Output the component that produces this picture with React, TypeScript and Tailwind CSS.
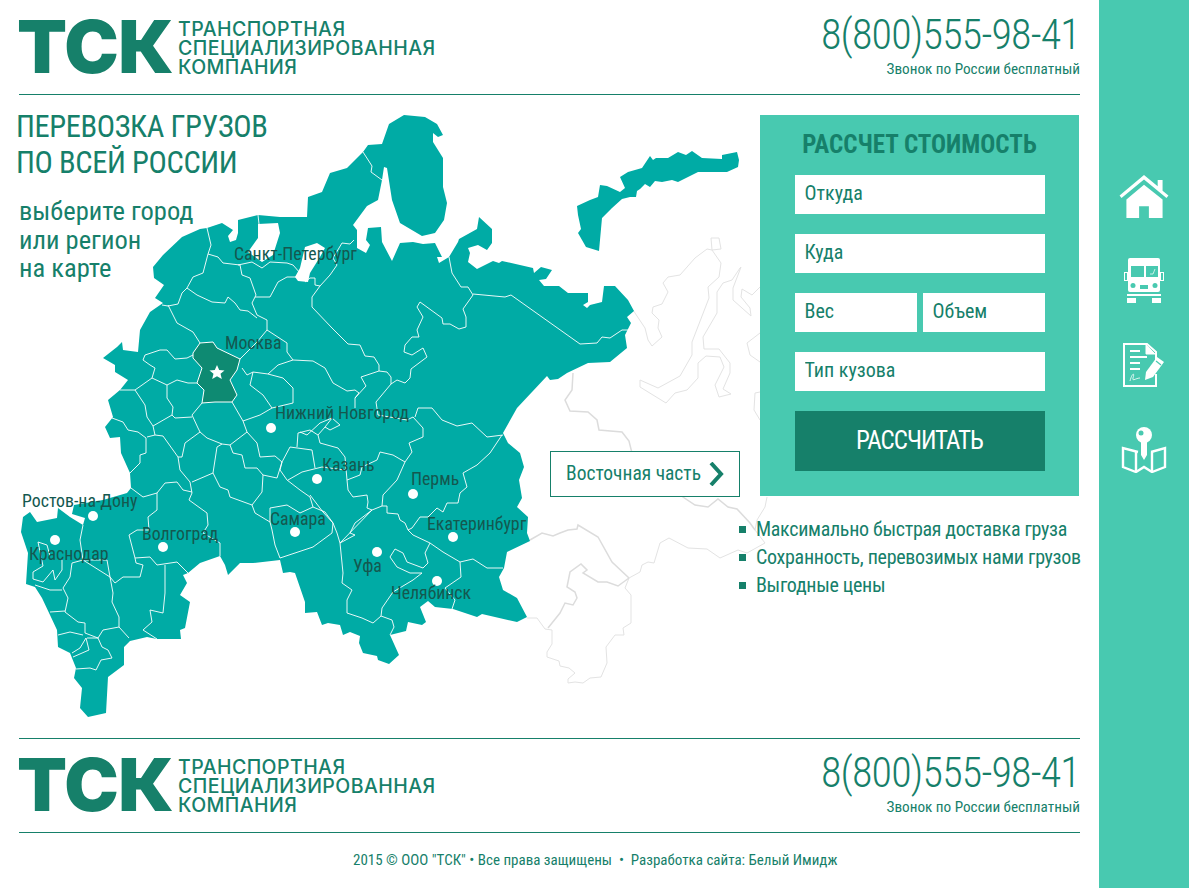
const OUTLINE = "153,267 163,255 182,237 200,229 207,228 222,223 233,230 228,236 230,242 236,240 238,233 238,220 258,215 280,217 307,217 308,197 322,192 330,173 347,168 363,152 368,145 382,144 389,124 404,115 425,117 437,124 443,135 438,137 433,133 433,142 443,158 443,187 447,203 444,220 435,233 422,236 400,223 392,200 387,168 384,167 382,180 378,200 367,206 353,225 357,230 357,248 366,253 370,245 366,240 368,228 381,227 382,242 392,261 400,243 413,242 423,244 435,243 442,257 437,257 439,263 449,257 458,242 459,239 477,229 479,217 492,229 492,243 487,250 478,245 468,248 470,253 468,262 477,269 493,261 499,263 502,261 533,268 534,273 541,267 552,270 546,279 539,280 544,286 559,286 568,293 588,293 588,302 583,305 587,308 590,305 602,302 604,286 615,286 628,300 634,311 627,317 631,323 625,335 627,348 610,362 588,363 567,373 558,379 550,380 547,376 532,392 517,408 503,433 508,443 520,453 524,467 519,480 522,498 517,507 528,517 527,533 530,541 507,552 504,568 499,577 503,590 517,598 527,617 517,622 482,614 477,617 453,609 435,607 428,601 420,607 426,622 422,625 408,622 406,631 390,635 399,655 389,664 378,660 377,656 363,653 359,643 360,636 350,632 343,635 340,625 328,623 322,625 317,612 305,613 305,602 295,573 290,572 283,573 280,560 253,563 240,563 228,575 225,565 220,556 200,563 188,573 183,575 187,583 180,595 190,602 185,628 180,630 181,639 157,639 147,637 130,641 124,647 124,665 108,677 106,713 88,717 80,708 82,688 74,678 76,668 70,653 58,647 57,630 50,615 42,598 35,587 26,584 28,553 21,532 23,517 30,512 37,522 57,518 58,508 70,517 83,525 85,518 72,514 74,505 103,500 127,493 131,488 130,473 121,453 120,437 110,438 105,427 113,417 108,400 120,390 128,380 115,372 115,365 103,358 117,347 122,342 123,350 138,352 140,330 150,312 163,303 155,298 164,285 154,278";

const LAKES = ["258,224 278,223 280,233 273,255 262,262 248,252 258,238", "305,247 317,243 325,248 320,257 310,273 308,282 298,281 295,277 300,268"];

const NZ = "577,206 590,200 598,197 600,185 607,186 620,192 625,188 620,177 628,172 642,168 650,156 653,160 656,158 668,158 678,152 686,155 692,151 702,158 722,159 722,155 737,152 739,160 738,167 727,172 698,172 678,182 672,180 662,182 655,181 650,187 645,184 640,189 637,191 636,197 630,197 622,199 612,208 602,218 599,251 586,247 582,240 578,233 581,229 578,215";

const BORDERS = [
  "207,228 211,245 208,254 203,273 193,277 187,288 182,293 178,304 168,306 162,305",
  "208,254 218,257 223,263 240,265 242,275 250,278 256,295 252,303 257,315 267,320 267,330",
  "187,288 197,295 212,302 225,303 228,297 235,303 240,310 248,311 257,318",
  "168,305 177,323 193,332 200,343",
  "267,330 287,343 287,352 293,360 313,361 325,368 333,383 347,391 355,390 359,393 355,398 355,408",
  "267,330 257,342 240,359",
  "293,360 278,365 268,374 253,372 247,375 242,368",
  "253,372 250,385 263,395 272,408 260,415 243,421 232,402",
  "243,421 247,432 257,443 260,457 275,456 282,462 277,478 263,475 257,468 245,468 242,455 233,453 230,445 247,432",
  "272,408 293,403 293,388 283,378 268,374",
  "202,403 192,415 198,428 200,432 207,438 222,444 230,445",
  "200,432 185,443 182,457 178,457 168,443 163,436 155,435 153,426 172,415 175,418 192,417",
  "167,385 167,398 173,407 172,415",
  "135,390 152,378 167,385 177,380 188,383 197,383",
  "152,378 155,368 150,365 143,360 145,355 160,350 167,350 175,359 187,358 193,355",
  "120,390 135,390 145,405 147,417 153,426",
  "112,418 123,422 128,430 138,432 146,438 146,453 140,455 140,463 130,473",
  "147,437 155,435",
  "178,457 180,470 190,482 192,493 189,500 207,513 208,525 203,533 220,543 220,556",
  "192,482 213,473 217,447 222,444",
  "213,473 220,487 228,490 230,497 252,505 262,492 263,475",
  "252,505 255,513 270,522 270,508 287,505 300,513 313,507 325,512 333,523 332,533 313,547 280,558 275,545 272,530 270,522",
  "313,507 310,497 300,490 287,480 280,470 282,462",
  "288,480 302,472 322,467 345,470",
  "282,462 290,447 312,450 315,468",
  "297,447 298,433 310,430 318,435 325,427 332,418 320,423 307,435 300,432",
  "325,427 330,430 340,425 332,418",
  "318,435 320,443 338,448 345,457 347,480 348,490 353,497 367,495 368,502 367,508 372,510 382,506",
  "347,480 360,475 362,467 377,460 380,452 393,455 405,462",
  "131,488 143,497 157,493 165,483 177,482 183,490 192,492",
  "157,493 157,510 148,517 149,530 137,530 129,535 135,558 136,563 143,565 140,577 123,577 115,583 110,577 107,560 83,560",
  "135,558 150,557 157,565 177,562 188,573",
  "165,565 165,593 163,613 150,610 152,622 143,630 157,639",
  "83,525 80,540 83,560 110,577 113,593 112,602 119,617 119,627 103,630 98,638 87,638",
  "119,627 129,638",
  "83,560 72,563 70,577 63,588 68,598 65,612 78,622 85,623 85,633 98,638",
  "35,585 50,590 62,590",
  "50,612 65,611",
  "58,635 70,632 83,635",
  "72,653 80,648 86,638 89,650 73,657",
  "76,669 90,668 96,670 101,660 112,658 108,650 102,647 98,638",
  "33,572 33,579 43,582 53,570 55,580 62,570 62,560",
  "33,572 43,566 38,542 47,545 50,556",
  "255,297 270,297 278,282 287,277 297,277",
  "238,265 252,262 262,268 270,262 287,263 293,265 300,273",
  "305,282 310,278 315,278 315,285 320,286 330,275 337,265 333,258 342,243 350,244 354,240",
  "320,286 312,297 312,307 332,328 348,344 360,345 365,356 374,357 379,365 379,371 361,377 366,386 355,398",
  "379,371 387,372 391,377 391,384 376,402 378,415 407,420 413,417 423,428 423,437 409,443 412,452 405,462 397,480 383,495 382,506",
  "391,384 397,380 405,383 410,378 411,369 427,357 423,348 412,355 404,352 405,345 412,337 419,337 417,330 423,317 417,307 420,302 442,318 443,324 450,324 459,329 466,327 466,317 463,309 473,295 468,287 461,287 452,273 449,257",
  "473,294 505,297 511,295 580,344 597,343 602,337 610,338 622,330 628,330",
  "363,152 372,166 371,172 382,180",
  "415,417 418,408 432,408 442,420 457,426 472,423 487,437 503,435",
  "502,435 490,453 477,465 463,473 467,487 460,493 458,503 447,503 443,512 437,508 428,517 420,517 412,528 408,530",
  "382,506 387,506 387,513 398,514 400,520 405,523 408,530 413,535 430,543 443,552 460,562 473,559 487,568 503,568",
  "460,562 461,577 445,588 455,600 452,609",
  "430,543 425,553 428,563 423,568 407,562 403,553 395,549 390,557 397,567 410,573 422,573 413,580 393,592 382,608 381,616 392,620 394,627 390,635",
  "381,616 373,623 362,618 347,613 347,600 352,590 342,583 343,573 340,543 372,510",
  "340,543 337,533 333,523 323,512 310,495",
  "340,543 355,535 350,533 355,523 372,510",
  "258,215 259,224",
];

const GRAY_THIN = [
  "633,310 645,328 648,340 652,346 662,337 658,328 659,320 652,313 653,307 662,304 668,292 663,283 668,277 680,275 695,258 707,249 712,250 711,238 719,238 721,249 712,250 721,263 719,277 708,287 709,298 692,342 692,355 680,376 658,388 640,380 640,387 666,403 675,393 687,390 698,378 698,363 706,356 720,357 724,367 715,385 719,397 731,394 723,389 730,373 730,363 719,349 704,349 703,337 717,313 717,292 723,283 732,280 740,268 741,267 733,288 733,300 751,316 750,308 741,297 742,289 752,295 760,287",
  "760,333 747,343 750,355 760,362",
  "760,392 755,393 754,410 760,420",
  "767,497 765,507 757,520 755,530 765,543 747,553 738,550 720,558 707,549 688,548 669,538 660,543 654,563 648,562 642,565 640,572 629,578",
  "629,578 625,588 631,595 631,623 623,628 624,635 615,635 606,647 607,663 601,677 590,678 583,683 575,682 568,683 568,679 575,673 569,668 560,666 559,661 547,657 547,652 552,644 552,630 545,629 537,618 527,618",
];
const GRAY_THICK = [
  "573,373 572,390 565,400 570,411 588,412 597,420 599,430 622,432 629,441 632,453 633,468 650,468 672,482 680,487 683,497 695,505 708,507 718,499 728,507 737,509 750,523 755,530",
  "530,540 542,533 553,536 560,533 568,530 577,529 578,525 598,537 612,562 629,578",
  "548,628 560,613 565,603 573,605 577,598 575,592 567,587 570,572 581,564 587,570 583,573 598,582 607,582 618,586 629,578",
];

const PINS = [[271, 428], [317, 479], [413, 494], [453, 537], [295, 532], [377, 552], [437, 581], [163, 547], [93, 516], [55, 540]];

const LABELS: { text: string; x: number; y: number }[] = [
  { text: "Санкт-Петербург", x: 234, y: 254 },
  { text: "Москва", x: 225, y: 343 },
  { text: "Нижний Новгород", x: 275, y: 413 },
  { text: "Казань", x: 322, y: 465 },
  { text: "Пермь", x: 411, y: 479 },
  { text: "Екатеринбург", x: 427, y: 524 },
  { text: "Самара", x: 270, y: 519 },
  { text: "Уфа", x: 353, y: 566 },
  { text: "Челябинск", x: 391, y: 593 },
  { text: "Волгоград", x: 142, y: 534 },
  { text: "Ростов-на-Дону", x: 22, y: 501 },
  { text: "Краснодар", x: 29, y: 554 },
];

function RussiaMap() {
  return (
    <svg viewBox="0 95 1099 643" className="absolute left-0 top-0 h-[643px] w-[1099px]">
      {GRAY_THIN.map((p, i) => (
        <polyline key={i} points={p} fill="none" stroke="#e3e3e3" strokeWidth="1" />
      ))}
      {GRAY_THICK.map((p, i) => (
        <polyline key={i} points={p} fill="none" stroke="#dcdcdc" strokeWidth="1.5" />
      ))}
      <polygon points={OUTLINE} fill="#00aba5" />
      <polygon points={NZ} fill="#00aba5" />
      {LAKES.map((p, i) => (
        <polygon key={i} points={p} fill="#fff" />
      ))}
      {BORDERS.map((p, i) => (
        <polyline key={i} points={p} fill="none" stroke="#ffffff" strokeWidth="1" strokeOpacity="0.9" />
      ))}
      <polygon
        points="193,353 200,343 213,342 217,348 240,359 237,370 230,380 237,395 232,402 222,402 215,402 202,403 204,390 197,383 202,368 193,358"
        fill="#0e8a72"
        stroke="#ffffff"
        strokeWidth="1"
      />
      <polygon
        points="217,365 219.2,370 224.5,370.4 220.5,373.8 221.8,379 217,376.2 212.2,379 213.5,373.8 209.5,370.4 214.8,370"
        fill="#fff"
      />
      {PINS.map(([x, y], i) => (
        <circle key={i} cx={x} cy={y} r="5" fill="#fff" />
      ))}
    </svg>
  );
}

function Logo() {
  return (
    <div className="flex items-start">
      <span className="-ml-[2px] w-[161px] font-['Inter'] text-[73px] font-black leading-[52px] tracking-[-0.5px] text-[#16806a]">ТСК</span>
      <div className="-mt-[1px] font-['Inter'] text-[19.5px] font-medium leading-[19px] tracking-[0.45px] text-[#16806a]">
        <div>ТРАНСПОРТНАЯ</div>
        <div>СПЕЦИАЛИЗИРОВАННАЯ</div>
        <div>КОМПАНИЯ</div>
      </div>
    </div>
  );
}

function Phone() {
  return (
    <div className="text-right text-[#16806a]">
      <div className="text-[42px] font-light leading-[44px] tracking-[-0.8px]">8(800)555-98-41</div>
      <div className="mt-[3px] text-[15.2px] leading-[18px]">Звонок по России бесплатный</div>
    </div>
  );
}

function HouseIcon() {
  return (
    <svg width="50" height="43" viewBox="0 0 50 44" fill="#fff">
      <path d="M0 21 L25 0 L39 11.5 L39 5 L44 5 L44 16 L50 21 L48 23.5 L25 4.5 L2 23.5 Z" />
      <path d="M7 25 L25 10 L44 25 L44 44 L30 44 L30 32 L20 32 L20 44 L7 44 Z" />
    </svg>
  );
}

function TruckIcon() {
  return (
    <svg width="40" height="45" viewBox="0 0 40 45">
      <rect x="4" y="0" width="32" height="34" rx="2" fill="#fff" />
      <rect x="7" y="8" width="13" height="11" fill="#48c9b0" />
      <rect x="22" y="8" width="12" height="11" fill="#48c9b0" />
      <path d="M26 16 L29 16 L31 11" stroke="#fff" strokeWidth="0.7" fill="none" />
      <rect x="0.5" y="14.5" width="3" height="8" fill="none" stroke="#fff" strokeWidth="1" />
      <rect x="36.5" y="14.5" width="3" height="8" fill="none" stroke="#fff" strokeWidth="1" />
      <circle cx="9" cy="27.5" r="2.5" fill="#48c9b0" />
      <circle cx="31" cy="27.5" r="2.5" fill="#48c9b0" />
      <rect x="16" y="27" width="8" height="4" fill="#48c9b0" />
      <rect x="3" y="36" width="34" height="2" fill="#fff" />
      <rect x="3" y="40" width="9" height="5" fill="#fff" />
      <rect x="28" y="40" width="9" height="5" fill="#fff" />
    </svg>
  );
}

function DocIcon() {
  return (
    <svg width="42" height="44" viewBox="0 0 42 44" fill="none">
      <path d="M33 17 L33 9 L24 1 L1 1 L1 43 L33 43 L33 31" stroke="#fff" strokeWidth="2" />
      <path d="M23 2 L23 11 L32 11 Z" fill="#fff" stroke="#fff" strokeWidth="1" />
      <rect x="7" y="7" width="10" height="2" fill="#fff" />
      <rect x="7" y="13" width="17" height="2" fill="#fff" />
      <rect x="7" y="19" width="10" height="2" fill="#fff" />
      <rect x="7" y="25" width="10" height="2" fill="#fff" />
      <path d="M7 38 C9 30 12 29 10 35 C9 39 13 35 17 35" stroke="#fff" strokeWidth="0.8" />
      <path d="M22 37 L23 29 L34 14 L41 19 L30 34 Z" fill="#fff" />
      <path d="M33 18 L38 22" stroke="#48c9b0" strokeWidth="1.2" />
    </svg>
  );
}

function KeyMapIcon() {
  return (
    <svg width="46" height="46" viewBox="0 0 46 46">
      <circle cx="23" cy="8" r="8" fill="#fff" />
      <circle cx="20" cy="6" r="2.5" fill="#48c9b0" />
      <path d="M20 14 L26 14 L26 28 L23 33 L20 28 Z" fill="#fff" />
      <path d="M17 25 L2 21 L2 40 L15 45 L23 40 L31 45 L44 40 L44 21 L30 25" fill="none" stroke="#fff" strokeWidth="2.4" />
      <path d="M15 25 L15 45 M31 25 L31 45" stroke="#fff" strokeWidth="2.4" />
    </svg>
  );
}

function Field({ placeholder, className }: { placeholder: string; className: string }) {
  return (
    <input
      placeholder={placeholder}
      className={`h-[39px] bg-white px-[10px] pb-[3px] text-[20px] text-[#16806a] outline-none placeholder:text-[#16806a] ${className}`}
    />
  );
}

export default function App() {
  return (
    <div className="flex h-[888px] w-[1189px] overflow-hidden bg-white font-['Roboto',sans-serif] [font-stretch:75%]">
      <div className="flex w-[1099px] flex-col">
        <header className="mx-[19px] flex h-[95px] items-start justify-between border-b border-[#16806a] pt-[21px]">
          <Logo />
          <div className="-mt-[8px]">
            <Phone />
          </div>
        </header>

        <main className="relative h-[643px]">
          <RussiaMap />
          {LABELS.map((l) => (
            <span
              key={l.text}
              className="absolute -translate-y-1/2 text-[17.8px] leading-[20px] whitespace-nowrap text-[#14584f]"
              style={{ left: l.x, top: l.y - 95 }}
            >
              {l.text}
            </span>
          ))}
          <div className="relative flex items-start justify-between pl-[16px] pr-[20px] pt-[14px]">
            <div>
              <h1 className="text-[30.5px] leading-[36px] tracking-[-0.4px] text-[#16806a]">
                ПЕРЕВОЗКА ГРУЗОВ
                <br />
                ПО ВСЕЙ РОССИИ
              </h1>
              <p className="ml-[3px] mt-[16px] text-[26.5px] leading-[28.5px] text-[#16806a]">
                выберите город
                <br />
                или регион
                <br />
                на карте
              </p>
            </div>
            <div className="mt-[6px] w-[319px]">
              <form className="flex h-[381px] flex-col items-center bg-[#48c9b0] pt-[16px]">
                <h2 className="h-[44px] text-[25px] font-bold leading-[28px] text-[#16806a]">РАССЧЕТ СТОИМОСТЬ</h2>
                <div className="flex w-[250px] flex-col gap-[20px]">
                  <Field placeholder="Откуда" className="w-full" />
                  <Field placeholder="Куда" className="w-full" />
                  <div className="flex gap-[6px]">
                    <Field placeholder="Вес" className="w-[122px]" />
                    <Field placeholder="Объем" className="w-[122px]" />
                  </div>
                  <Field placeholder="Тип кузова" className="w-full" />
                  <button type="button" className="h-[60px] bg-[#16806a] text-[25px] tracking-[-1px] text-white">
                    РАССЧИТАТЬ
                  </button>
                </div>
              </form>
              <ul className="-ml-[21px] mt-[19px] w-[345px] text-[20px] leading-[28px] tracking-[-0.3px] text-[#16806a]">
                {["Максимально быстрая доставка груза", "Сохранность, перевозимых нами грузов", "Выгодные цены"].map((t) => (
                  <li key={t} className="flex items-center gap-[10px] whitespace-nowrap">
                    <span className="h-[7px] w-[7px] shrink-0 bg-[#16806a]" />
                    {t}
                  </li>
                ))}
              </ul>
            </div>
          </div>
          <a className="absolute left-[550px] top-[356px] flex h-[46px] w-[190px] items-center border border-[#16806a] bg-white pl-[15px] text-[19.5px] whitespace-nowrap text-[#16806a]">
            Восточная часть
            <svg width="15" height="24" viewBox="0 0 15 24" className="ml-[8px] shrink-0">
              <path d="M2 1 L12 12 L2 23" fill="none" stroke="#16806a" strokeWidth="4" />
            </svg>
          </a>
        </main>

        <footer className="mx-[19px] flex flex-col">
          <div className="flex h-[95px] items-start justify-between border-y border-[#16806a] pt-[20px]">
            <Logo />
            <div className="-mt-[8px]">
              <Phone />
            </div>
          </div>
          <p className="ml-[334px] mt-[17px] text-[15px] leading-[20px] text-[#16806a]">
            2015 © ООО "ТСК" • Все права защищены&nbsp; • &nbsp;Разработка сайта: Белый Имидж
          </p>
        </footer>
      </div>

      <aside className="flex w-[90px] flex-col items-center gap-[40px] bg-[#48c9b0] pt-[175px]">
        <HouseIcon />
        <TruckIcon />
        <DocIcon />
        <KeyMapIcon />
      </aside>
    </div>
  );
}
